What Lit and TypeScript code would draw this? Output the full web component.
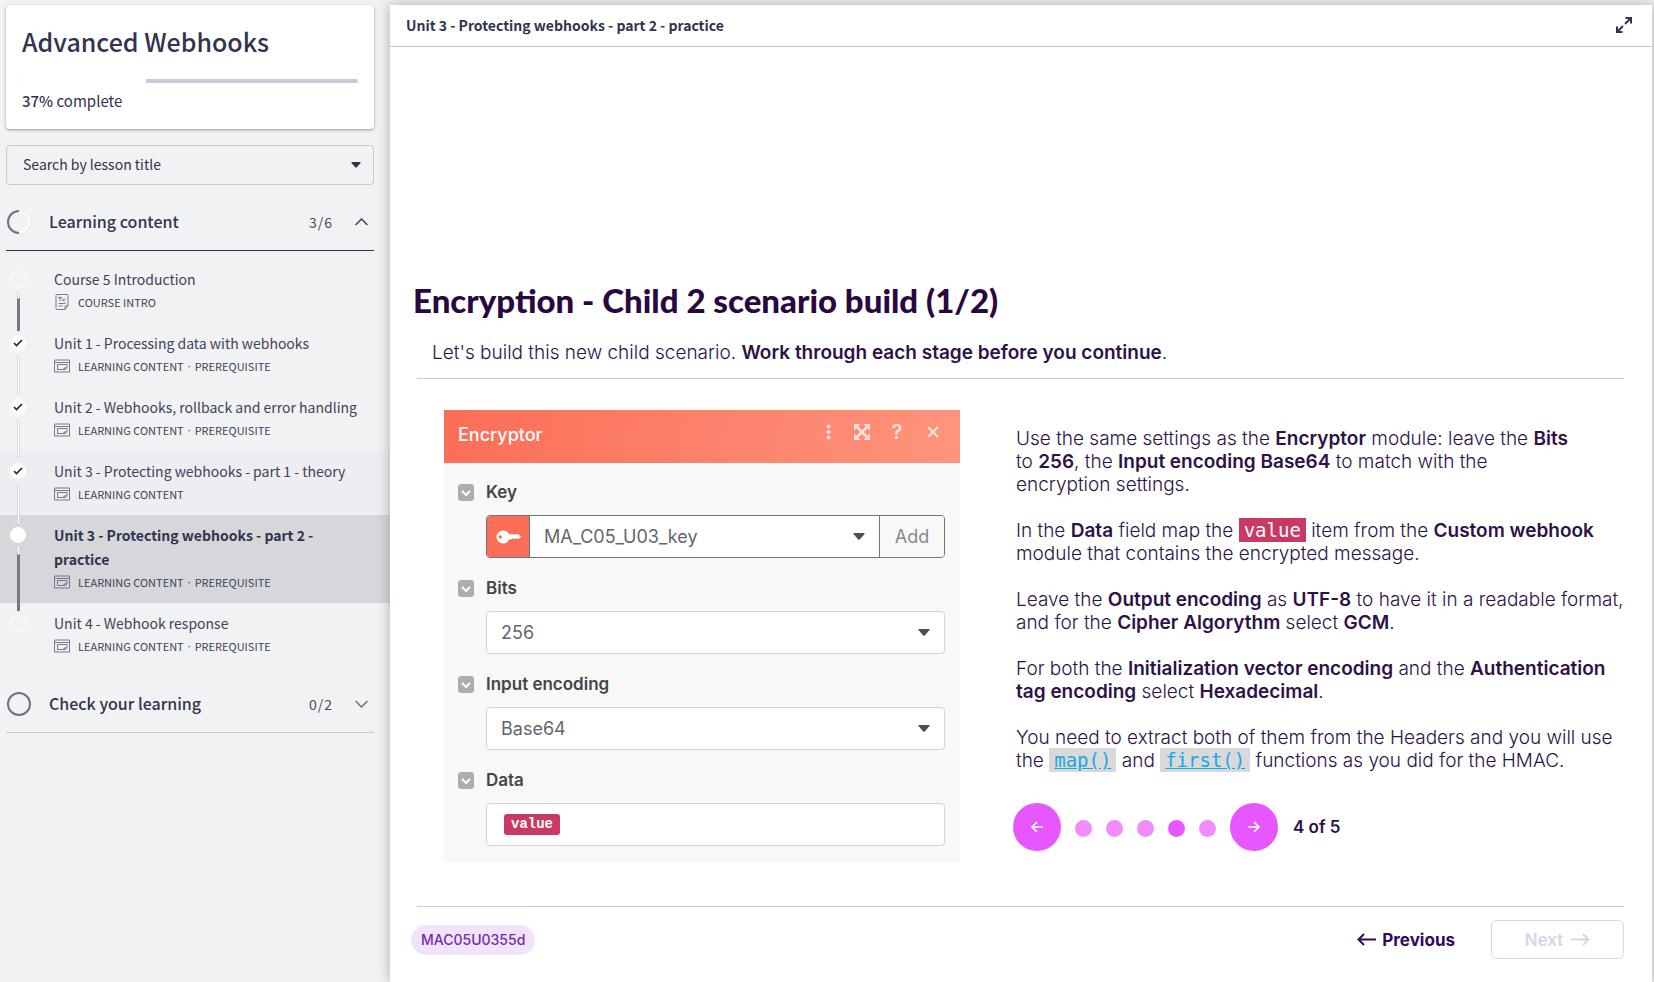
import { LitElement, html, css, svg, nothing } from "lit";
import { customElement, property, state } from "lit/decorators.js";
import { classMap } from "lit/directives/class-map.js";

type Status = "open" | "done" | "current";

interface Lesson {
  title: string;
  kind: string;
  prerequisite?: boolean;
  status: Status;
  text?: boolean;
  tinted?: boolean;
}

const lessons: Lesson[] = [
  { title: "Course 5 Introduction", kind: "Course intro", status: "open", text: true },
  { title: "Unit 1 - Processing data with webhooks", kind: "Learning content", prerequisite: true, status: "done" },
  { title: "Unit 2 - Webhooks, rollback and error handling", kind: "Learning content", prerequisite: true, status: "done" },
  { title: "Unit 3 - Protecting webhooks - part 1 - theory", kind: "Learning content", status: "done", tinted: true },
  { title: "Unit 3 - Protecting webhooks - part 2 - practice", kind: "Learning content", prerequisite: true, status: "current" },
  { title: "Unit 4 - Webhook response", kind: "Learning content", prerequisite: true, status: "open" },
];

const caret = html`<svg class="caret" viewBox="0 0 12 7" width="12" height="7" aria-hidden="true">
  <path d="M1 0h10q1 0 .5 1L7 6.300q-1 1-2 0L.5 1Q0 0 1 0z" fill="currentColor" />
</svg>`;

@customElement("course-sidebar")
export class CourseSidebar extends LitElement {
  @property({ type: Number }) progress = 37;

  static styles = css`
    :host {
      display: block;
      padding: 5px 16px 0 6px;
      box-sizing: border-box;
      color: #33334f;
      font-family: "Noto Sans CJK SC", sans-serif;
      font-size: 14px;
    }
    .card {
      background: #fff;
      border-radius: 4px;
      box-shadow: 0 1px 3px rgba(40, 44, 60, 0.45);
      padding: 16px;
      height: 124px;
      box-sizing: border-box;
    }
    h1 {
      margin: 0 0 18px;
      font-size: 25px;
      line-height: 40px;
      font-weight: 500;
    }
    .track {
      display: flex;
      height: 4px;
      border-radius: 2px;
      background: #c9cad6;
      overflow: hidden;
    }
    .fill {
      background: #fff;
    }
    .complete {
      margin: 6px 0 0;
      font-size: 15px;
      line-height: 24px;
    }
    .complete b {
      font-weight: 500;
    }
    .search {
      display: grid;
      align-items: center;
      margin-top: 16px;
    }
    .search select {
      grid-area: 1 / 1;
      appearance: none;
      height: 40px;
      padding: 0 16px 2px;
      border: 1px solid #c7c9d6;
      border-radius: 4px;
      background: transparent;
      color: inherit;
      font: inherit;
    }
    .search .caret {
      grid-area: 1 / 1;
      justify-self: end;
      margin-right: 13px;
      width: 10px;
      height: 6px;
      pointer-events: none;
    }
    .section {
      display: flex;
      align-items: center;
      width: 100%;
      height: 57px;
      margin-top: 9px;
      padding: 0 6px 0 0;
      border: 0;
      border-bottom: 1px solid #c7c9d6;
      background: transparent;
      color: inherit;
      font: inherit;
      text-align: left;
    }
    .section.open {
      border-bottom-color: #33334f;
    }
    .section .name {
      flex: 1;
      margin-left: 18px;
      padding-bottom: 2px;
      font-size: 16px;
      font-weight: 500;
    }
    .section .count {
      margin-right: 22px;
      color: #4a4a62;
      letter-spacing: 1px;
    }
    ol {
      list-style: none;
      margin: 0 -16px 0 -6px;
      padding: 8px 0 0;
    }
    .lesson {
      display: grid;
      grid-template-columns: 54px 1fr;
      color: #42425a;
      text-decoration: none;
    }
    .tinted {
      background: #edeef2;
    }
    .current {
      background: #d5d7db;
    }
    .rail {
      display: flex;
      flex-direction: column;
      align-items: center;
      width: 36px;
      padding-top: 12px;
    }
    .dot {
      display: grid;
      place-items: center;
      flex: none;
      box-sizing: border-box;
      width: 16px;
      height: 16px;
      border: 1px solid #fff;
      border-radius: 50%;
    }
    .done .dot,
    .current .dot {
      background: #fff;
    }
    .line {
      flex: 1;
      width: 1px;
      margin: 4px 0 -8px;
      border: solid #d9dade;
      border-width: 0 1px;
      background: #fff;
      z-index: 1;
    }
    .ahead .line {
      background: linear-gradient(#fff 8px, #777788 8px);
      border-image: linear-gradient(#d9dade 8px, #777788 8px) 1;
      border-image-width: 0 1px;
      border-width: 0 1px;
    }
    .body {
      padding: 8px 52px 10px 0;
    }
    .wide .body {
      padding-right: 20px;
    }
    .title {
      display: block;
      line-height: 24px;
    }
    .current .title {
      color: #33334f;
      font-weight: 600;
    }
    .meta {
      display: flex;
      align-items: center;
      height: 22px;
      font-size: 11px;
      line-height: 22px;
      text-transform: uppercase;
    }
    .meta svg {
      flex: none;
      margin-right: 8px;
      color: #777790;
    }
    .sep {
      padding: 0 4px;
      font-family: "Noto Sans", sans-serif;
    }
  `;

  private docIcon(isText?: boolean) {
    return isText
      ? svg`<svg width="16" height="16" viewBox="0 0 16 16" fill="none" stroke="currentColor" aria-hidden="true">
          <path d="M3 .5h10a1 1 0 0 1 1 1V12l-3 3.500H3a1 1 0 0 1-1-1v-13a1 1 0 0 1 1-1zM14 12h-3v3.500M4.500 9.500h7M4.500 12h4"/>
          <path d="M4 3.500h4M6 3.500V7M8 4.500 11 7.500M11 4.500 8 7.500" /></svg>`
      : svg`<svg width="16" height="14" viewBox="0 0 16 14" fill="none" stroke="currentColor" aria-hidden="true">
          <path d="M.5 1h15v12H.5zM.5 3.500h15M3.500 5.500h9.500V9L11.500 10.500h-8zM13 9h-3v1.500"/></svg>`;
  }

  render() {
    return html`
      <section class="card">
        <h1>Advanced Webhooks</h1>
        <div class="track" role="progressbar" aria-label="Course progress" aria-valuenow=${this.progress}>
          <div class="fill" style="width:${this.progress}%"></div>
        </div>
        <p class="complete"><b>${this.progress}%</b> complete</p>
      </section>
      <div class="search">
        <select aria-label="Search by lesson title">
          <option>Search by lesson title</option>
        </select>
        ${caret}
      </div>
      <button class="section open" aria-expanded="true">
        <svg width="25" height="26" viewBox="0 0 25 26" fill="none" stroke-width="2" aria-hidden="true">
          <path d="M13 2a11 11 0 0 1 0 22" stroke="#d5d7dc" />
          <path d="M13 2.500a10.500 10.500 0 0 1 0 21" stroke="#fff" />
          <path d="M13 2a11 11 0 0 0 0 22" stroke="#6f7086" />
        </svg>
        <span class="name">Learning content</span>
        <span class="count">3/6</span>
        <svg width="13" height="8" viewBox="0 0 13 8" fill="none" stroke="#4a4a62" stroke-width="1.600" aria-hidden="true">
          <path d="M.6 7 6.500 1l5.900 6" />
        </svg>
      </button>
      <ol>
        ${lessons.map(
          (l, i) => html`<li>
            <a
              href="#"
              class=${classMap({
                lesson: true,
                [l.status]: true,
                tinted: !!l.tinted,
                ahead: l.status !== "done",
                wide: l.status !== "current",
              })}
            >
              <span class="rail">
                <span class="dot">
                  ${l.status === "done"
                    ? html`<svg width="10" height="8" viewBox="0 0 10 8" fill="none" stroke="#222230" stroke-width="1.600" aria-hidden="true">
                        <path d="M1 4l2.500 2.500L9 1" />
                      </svg>`
                    : nothing}
                </span>
                ${i < lessons.length - 1 ? html`<span class="line"></span>` : nothing}
              </span>
              <span class="body">
                <span class="title">${l.title}</span>
                <span class="meta"
                  >${this.docIcon(l.text)}<span>${l.kind}</span>${l.prerequisite
                    ? html`<span class="sep">·</span><span>Prerequisite</span>`
                    : nothing}</span
                >
              </span>
            </a>
          </li>`
        )}
      </ol>
      <button class="section" aria-expanded="false">
        <svg width="25" height="26" viewBox="0 0 25 26" fill="none" aria-hidden="true">
          <circle cx="13" cy="13" r="11" stroke="#6f7086" stroke-width="2" />
        </svg>
        <span class="name">Check your learning</span>
        <span class="count">0/2</span>
        <svg width="13" height="8" viewBox="0 0 13 8" fill="none" stroke="#77778c" stroke-width="1.600" aria-hidden="true">
          <path d="M.6 1 6.500 7l5.900-6" />
        </svg>
      </button>
    `;
  }
}

@customElement("encryptor-panel")
export class EncryptorPanel extends LitElement {
  static styles = css`
    :host {
      display: block;
      background: #f8f8f8;
      color: #454545;
      font-family: Inter, sans-serif;
      font-size: 18px;
    }
    header {
      display: flex;
      align-items: center;
      gap: 22px;
      height: 53px;
      padding: 0 20px 0 14px;
      box-sizing: border-box;
      background: linear-gradient(100deg, #fb6e58, #ff947c);
      color: #fff;
    }
    h3 {
      flex: 1;
      margin: 0;
      padding-bottom: 4px;
      font-size: 18px;
      font-weight: 500;
    }
    header button {
      display: grid;
      place-items: center;
      width: 14px;
      height: 22px;
      margin-bottom: 10px;
      padding: 0;
      border: 0;
      background: none;
      color: #ffe4de;
      font: 600 20px/22px Inter, sans-serif;
    }
    header .menu {
      width: 8px;
    }
    .fields {
      display: grid;
      gap: 20px;
      padding: 19px 15px 16px 14px;
    }
    .field {
      display: grid;
      grid-template-columns: 16px 1fr;
      column-gap: 12px;
      row-gap: 12px;
    }
    .toggle {
      display: grid;
      place-items: center;
      align-self: center;
      width: 16px;
      height: 17px;
      padding: 0;
      border: 0;
      border-radius: 3px;
      background: #adadad;
      color: #fff;
    }
    label {
      line-height: 21px;
      font-size: 17px;
      font-weight: 600;
    }
    .control {
      grid-column: 2;
      display: flex;
      align-items: center;
      height: 43px;
      box-sizing: border-box;
      border: 1px solid #d3d3d3;
      border-radius: 4px;
      background: #fff;
      color: #62676d;
      overflow: hidden;
    }
    .control.strong {
      border-color: #6d757d;
    }
    .pick {
      flex: 1;
      align-self: stretch;
      display: grid;
      align-items: center;
    }
    select {
      grid-area: 1 / 1;
      appearance: none;
      align-self: stretch;
      padding: 0 14px;
      border: 0;
      background: transparent;
      color: inherit;
      font: 400 18px Inter, sans-serif;
    }
    .caret {
      grid-area: 1 / 1;
      justify-self: end;
      margin-right: 14px;
      color: #495059;
      pointer-events: none;
    }
    .keycap {
      display: grid;
      place-items: center;
      align-self: stretch;
      width: 42px;
      background: #fb6e58;
    }
    .strong .pick {
      border: solid #6d757d;
      border-width: 0 1px;
    }
    .add {
      align-self: stretch;
      width: 64px;
      padding: 0;
      border: 0;
      background: #f8f8f8;
      color: #858a90;
      font: 400 18px Inter, sans-serif;
    }
    .chip {
      margin-left: 17px;
      padding: 0 7px;
      border-radius: 3px;
      background: #c93a62;
      color: #fff;
      font: 700 14px/21px "Liberation Mono", monospace;
    }
    input {
      flex: 1;
      min-width: 0;
      align-self: stretch;
      border: 0;
      background: transparent;
      font: inherit;
    }
  `;

  private toggle(name: string) {
    return html`<button class="toggle" aria-label="Toggle ${name}">
      <svg width="10" height="6" viewBox="0 0 10 6" fill="none" stroke="currentColor" stroke-width="2" aria-hidden="true">
        <path d="M1 1l4 4 4-4" />
      </svg>
    </button>`;
  }

  private choice(id: string, name: string, value: string) {
    return html`<div class="field">
      ${this.toggle(name)}<label for=${id}>${name}</label>
      <div class="control">
        <div class="pick">
          <select id=${id}><option>${value}</option></select>
          ${caret}
        </div>
      </div>
    </div>`;
  }

  render() {
    return html`
      <header>
        <h3>Encryptor</h3>
        <button class="menu" aria-label="Menu">
          <svg width="5" height="16" viewBox="0 0 5 16" fill="currentColor" aria-hidden="true">
            <circle cx="2.500" cy="2.500" r="2.100" /><circle cx="2.500" cy="8" r="2.100" /><circle cx="2.500" cy="13.500" r="2.100" />
          </svg>
        </button>
        <button aria-label="Expand">
          <svg width="16" height="16" viewBox="0 0 16 16" fill="currentColor" stroke="currentColor" aria-hidden="true">
            <path d="M3 3l10 10M13 3 3 13" stroke-width="2.600" />
            <path d="M0 0h6.500L0 6.500zM16 0v6.500L9.500 0zM0 16V9.500L6.500 16zM16 16H9.500L16 9.500z" stroke="none" />
          </svg>
        </button>
        <button aria-label="Help">?</button>
        <button aria-label="Close">
          <svg width="12" height="12" viewBox="0 0 12 12" stroke="currentColor" stroke-width="2.200" aria-hidden="true">
            <path d="M1 1l10 10M11 1 1 11" />
          </svg>
        </button>
      </header>
      <div class="fields">
        <div class="field">
          ${this.toggle("Key")}<label for="key">Key</label>
          <div class="control strong">
            <span class="keycap">
              <svg width="25" height="14" viewBox="0 0 25 14" aria-hidden="true">
                <path
                  fill="#fff"
                  fill-rule="evenodd"
                  d="M7 .5c3 0 5 1.500 6 3.800h9.500L25 6.500 22.800 9h-1.500l-1.200-1-1.300 1.200-1.500-1.200-1.500 1.200H13c-1 2.700-3 4.300-6 4.300A6.500 6.500 0 0 1 7 .5zM4.200 5.200a1.800 1.800 0 1 0 .1 3.600 1.800 1.800 0 0 0-.1-3.600z"
                />
              </svg>
            </span>
            <div class="pick">
              <select id="key"><option>MA_C05_U03_key</option></select>
              ${caret}
            </div>
            <button class="add">Add</button>
          </div>
        </div>
        ${this.choice("bits", "Bits", "256")} ${this.choice("encoding", "Input encoding", "Base64")}
        <div class="field">
          ${this.toggle("Data")}<label for="data">Data</label>
          <div class="control"><span class="chip">value</span><input id="data" /></div>
        </div>
      </div>
    `;
  }
}

@customElement("app-root")
export class AppRoot extends LitElement {
  @state() private step = 4;
  private readonly steps = 5;

  static styles = css`
    :host {
      display: grid;
      grid-template-columns: 390px minmax(0, 1fr);
      min-height: 100vh;
      background: #f1f2f4;
      overflow: hidden;
    }
    main {
      display: flex;
      flex-direction: column;
      margin: 5px 2px 0 0;
      background: #fff;
      box-shadow: 0 0 12px rgba(60, 64, 80, 0.4);
    }
    .bar {
      display: flex;
      align-items: center;
      justify-content: space-between;
      height: 41px;
      padding: 0 20px 0 16px;
      border-bottom: 1px solid #c7c9d2;
      color: #33334f;
      font-family: "Noto Sans CJK SC", sans-serif;
    }
    .bar h2 {
      margin: 0;
      padding-bottom: 2px;
      font-size: 14px;
      line-height: 24px;
      font-weight: 600;
    }
    .bar button {
      display: grid;
      padding: 0 0 2px;
      border: 0;
      background: none;
      color: inherit;
    }
    article {
      padding: 229px 28px 0 27px;
      color: #2d1248;
      font-family: Inter, sans-serif;
      font-size: 19px;
      font-weight: 300;
    }
    h1 {
      margin: 0 -4px;
      font: 900 33px/48px Lato, sans-serif;
      color: #28093f;
    }
    .lead {
      margin: 17px 15px 13px;
      line-height: 24px;
    }
    b {
      font-weight: 600;
    }
    .columns {
      display: grid;
      grid-template-columns: minmax(0, 516fr) minmax(0, 608fr);
      gap: 56px;
      padding: 31px 0 44px 27px;
      border: solid #d3c9c7;
      border-width: 1px 0;
    }
    .notes {
      display: flex;
      flex-direction: column;
      padding-top: 17px;
    }
    .notes p {
      margin: 0 -8px 23px 0;
      line-height: 23px;
    }
    code {
      padding: 1px 5px;
      background: #d9d9d9;
      font: 400 19px/19px "DejaVu Sans Mono", monospace;
    }
    .pill {
      background: #c93a62;
      color: #fff;
    }
    a {
      color: #18a8e8;
    }
    .pager {
      display: flex;
      align-items: center;
      margin: 8px 0 0 -3px;
    }
    .pager button {
      display: grid;
      place-items: center;
      padding: 0;
      border: 0;
      border-radius: 50%;
      color: #fff;
    }
    .arrow {
      width: 48px;
      height: 48px;
      background: #e757ff;
    }
    .dots {
      display: flex;
      gap: 14px;
      padding: 2px 14px 0;
    }
    .dots button {
      width: 17px;
      height: 17px;
      background: #f08cff;
    }
    .dots .on {
      background: #e757ff;
    }
    .pager output {
      margin-left: 15px;
      font-size: 17px;
      font-weight: 600;
    }
    footer {
      display: flex;
      align-items: center;
      height: 65px;
    }
    .tag {
      margin: 0 auto 0 -6px;
      padding: 0 10px;
      border-radius: 15px;
      background: #f0e3fb;
      color: #762ba6;
      font-size: 14px;
      line-height: 30px;
      font-weight: 500;
    }
    footer button {
      display: flex;
      align-items: center;
      justify-content: center;
      gap: 5px;
      height: 39px;
      padding: 0;
      border: 0;
      background: none;
      color: #310a5e;
      font: 700 17px Inter, sans-serif;
    }
    footer .next {
      width: 133px;
      margin-left: 36px;
      gap: 7px;
      border: 1px solid #dfd5e8;
      border-radius: 6px;
      color: #ddd3e6;
      font-weight: 600;
    }
  `;

  private arrow(dir: "left" | "right", w: number, h: number, weight: number) {
    const d = dir === "left" ? "M19 6.500H1.500M7 1 1.500 6.500 7 12" : "M1 6.500h17.500M13 1l5.500 5.500L13 12";
    return html`<svg width=${w} height=${h} viewBox="0 0 20 13" fill="none" stroke="currentColor" stroke-width=${weight} aria-hidden="true">
      <path d=${d} />
    </svg>`;
  }

  private small(flip: boolean) {
    const d = flip ? "M1 6h11M7 1l5 5-5 5" : "M13 6H2M7 1 2 6l5 5";
    return html`<svg width="14" height="12" viewBox="0 0 14 12" fill="none" stroke="currentColor" stroke-width="1.700" aria-hidden="true">
      <path d=${d} />
    </svg>`;
  }

  render() {
    return html`
      <course-sidebar></course-sidebar>
      <main>
        <div class="bar">
          <h2>Unit 3 - Protecting webhooks - part 2 - practice</h2>
          <button aria-label="Full screen">
            <svg width="16" height="16" viewBox="0 0 16 16" fill="none" stroke="currentColor" stroke-width="2" aria-hidden="true">
              <path d="M9.500 1H15v5.500M15 1 9 7M1 9.500V15h5.500M1 15l6-6" />
            </svg>
          </button>
        </div>
        <article>
          <h1>Encryption - Child 2 scenario build (1/2)</h1>
          <p class="lead">Let's build this new child scenario. <b>Work through each stage before you continue</b>.</p>
          <div class="columns">
            <encryptor-panel></encryptor-panel>
            <div class="notes">
              <p>
                Use the same settings as the <b>Encryptor</b> module: leave the <b>Bits</b> to&nbsp;<b>256</b>, the
                <b>Input encoding Base64</b> to match with the encryption&nbsp;settings.
              </p>
              <p>
                In the <b>Data</b> field map the <code class="pill">value</code> item from the <b>Custom webhook</b>
                module that contains the encrypted message.
              </p>
              <p>
                Leave the <b>Output encoding</b> as <b>UTF-8</b> to have it in a readable format, and for the
                <b>Cipher Algorythm</b> select <b>GCM</b>.
              </p>
              <p>
                For both the <b>Initialization vector encoding</b> and the <b>Authentication tag encoding</b> select
                <b>Hexadecimal</b>.
              </p>
              <p>
                You need to extract both of them from the Headers and you will use the
                <code><a href="#">map()</a></code> and <code><a href="#">first()</a></code> functions as you did for the
                HMAC.
              </p>
              <nav class="pager" aria-label="Steps">
                <button class="arrow" aria-label="Previous step" @click=${() => (this.step = Math.max(1, this.step - 1))}>
                  ${this.small(false)}
                </button>
                <div class="dots">
                  ${Array.from(
                    { length: this.steps },
                    (_, i) => html`<button
                      class=${classMap({ on: i + 1 === this.step })}
                      aria-label="Step ${i + 1}"
                      @click=${() => (this.step = i + 1)}
                    ></button>`
                  )}
                </div>
                <button class="arrow" aria-label="Next step" @click=${() => (this.step = Math.min(this.steps, this.step + 1))}>
                  ${this.small(true)}
                </button>
                <output>${this.step} of ${this.steps}</output>
              </nav>
            </div>
          </div>
          <footer>
            <span class="tag">MAC05U0355d</span>
            <button>${this.arrow("left", 20, 13, 2)} Previous</button>
            <button class="next" aria-disabled="true">Next ${this.arrow("right", 20, 13, 1.8)}</button>
          </footer>
        </article>
      </main>
    `;
  }
}
